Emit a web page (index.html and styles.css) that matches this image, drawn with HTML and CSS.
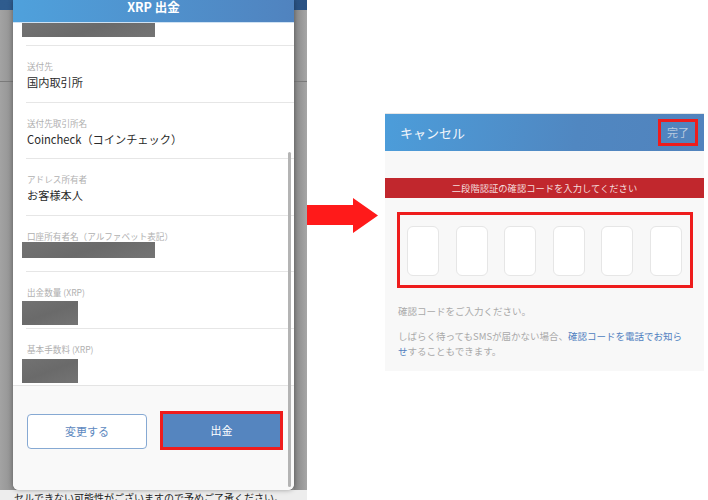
FILE: index.html
```html
<!DOCTYPE html>
<html lang="ja">
<head>
<meta charset="utf-8">
<title>XRP 出金</title>
<link rel="stylesheet" href="styles.css">
</head>
<body>
<div class="shot-left">
  <div class="backdrop">
    <div class="bd-top"></div>
    <div class="bd-band"></div>
    <div class="bd-fill"></div>
    <div class="bd-bottom">セルできない可能性がございますので予めご了承ください。</div>
  </div>
  <div class="modal">
    <div class="modal-head">XRP 出金</div>
    <div class="modal-body">
      <div class="row row-first"><div class="redact redact-wide redact-cut"></div></div>
      <div class="row">
        <div class="label">送付先</div>
        <div class="value">国内取引所</div>
      </div>
      <div class="row">
        <div class="label">送付先取引所名</div>
        <div class="value">Coincheck（コインチェック）</div>
      </div>
      <div class="row">
        <div class="label">アドレス所有者</div>
        <div class="value">お客様本人</div>
      </div>
      <div class="row">
        <div class="label">口座所有者名（アルファベット表記）</div>
        <div class="redact redact-wide"></div>
      </div>
      <div class="row">
        <div class="label">出金数量 (XRP)</div>
        <div class="redact redact-small"></div>
      </div>
      <div class="row row-last">
        <div class="label">基本手数料 (XRP)</div>
        <div class="redact redact-small redact-low"></div>
      </div>
    </div>
    <div class="modal-foot">
      <div class="btn btn-outline">変更する</div>
      <div class="mark"><div class="btn btn-fill">出金</div></div>
    </div>
    <div class="scrollbar"></div>
  </div>
</div>

<div class="arrow-col">
  <svg class="arrow" width="71" height="36" viewBox="0 0 71 36">
    <polygon points="0,7 46,7 46,0 71,17.5 46,35 46,27 0,27" fill="#ff1a1a"/>
  </svg>
</div>

<div class="panel">
  <div class="panel-head">
    <span class="cancel">キャンセル</span>
    <span class="done">完了</span>
  </div>
  <div class="panel-body">
    <div class="banner">二段階認証の確認コードを入力してください</div>
    <div class="code-mark">
      <div class="digit"></div>
      <div class="digit"></div>
      <div class="digit"></div>
      <div class="digit"></div>
      <div class="digit"></div>
      <div class="digit"></div>
    </div>
    <p class="note">確認コードをご入力ください。</p>
    <p class="note note-2">しばらく待ってもSMSが届かない場合、<span class="link">確認コードを電話でお知らせ</span>することもできます。</p>
  </div>
</div>
</body>
</html>
```

FILE: styles.css
```css
* { box-sizing: border-box; }
html, body { margin: 0; padding: 0; }
body {
  width: 708px;
  height: 500px;
  overflow: hidden;
  background: #ffffff;
  display: flex;
  align-items: flex-start;
  font-family: "Noto Sans CJK JP", "Noto Sans", sans-serif;
}

/* ---------- left screenshot ---------- */
.shot-left {
  position: relative;
  width: 307px;
  height: 500px;
  flex: none;
  overflow: hidden;
}
.backdrop {
  height: 500px;
  display: flex;
  flex-direction: column;
  background: linear-gradient(90deg, #a3a3a3 0px, #929292 13px, #929292 294px, #868686 294px, #a6a6a6 307px);
}
.bd-top {
  height: 10px;
  background: linear-gradient(90deg, #2f5c8e 0, #2a5283 100%);
}
.bd-band {
  height: 72px;
  border-bottom: 1px solid #7a7a7a;
}
.bd-fill { flex: 1; }
.bd-bottom {
  height: 10px;
  background: #ededed;
  font-size: 10px;
  line-height: 14px;
  color: #222;
  padding-left: 14px;
  overflow: hidden;
  white-space: nowrap;
  padding-top: 1px;
}

.modal {
  position: absolute;
  left: 13px;
  top: 0;
  width: 281px;
  height: 490px;
  background: #ffffff;
  border-radius: 0 0 6px 6px;
  overflow: hidden;
  box-shadow: 0 0 5px rgba(0, 0, 0, 0.35);
  display: flex;
  flex-direction: column;
}
.modal-head {
  height: 23px;
  flex: none;
  background: linear-gradient(90deg, #4fa1dc 0%, #5083bf 100%);
  border-bottom: 1px solid #cfe2f3;
  color: #ffffff;
  font-weight: bold;
  font-size: 12.5px;
  line-height: 13px;
  text-align: center;
}
.modal-body {
  flex: 1;
  display: flex;
  flex-direction: column;
}
.row {
  margin-left: 13px;
  padding-left: 1px;
  height: 56.6px;
  padding-top: 14px;
  border-bottom: 1px solid #e6e6e6;
}
.row-first {
  height: 23px;
  padding-top: 0;
}
.row-last {
  border-bottom: none;
  height: 55px;
}
.label {
  font-size: 8.6px;
  line-height: 12px;
  color: #b0b0b0;
  white-space: nowrap;
}
.value {
  margin-top: 2px;
  font-size: 11.2px;
  line-height: 16px;
  color: #2a2a2a;
  white-space: nowrap;
}
.redact {
  margin-left: -5px;
  background: linear-gradient(160deg, #727272 0%, #6a6a6a 50%, #747474 100%);
}
.redact-wide {
  width: 133px;
  height: 16px;
}
.redact-cut {
  height: 14px;
}
.redact-small {
  width: 56px;
  height: 24px;
  margin-top: 3px;
}
.redact-low { margin-top: 4px; }

.modal-foot {
  height: 105px;
  flex: none;
  background: #f9f9f9;
  border-top: 1px solid #e4e4e4;
  display: flex;
  align-items: flex-start;
  gap: 13px;
  padding: 25px 0 0 14px;
}
.btn {
  height: 35px;
  font-size: 11px;
  line-height: 33px;
  text-align: center;
  border-radius: 4px;
}
.btn-outline {
  width: 120px;
  margin-top: 3px;
  border: 1px solid #86a9d3;
  background: #ffffff;
  color: #5d88c0;
}
.mark {
  border: 3px solid #ee1c1c;
}
.btn-fill {
  width: 117px;
  height: 33px;
  line-height: 33px;
  border-radius: 0;
  background: #5585bf;
  color: #ffffff;
}
.scrollbar {
  position: absolute;
  right: 3px;
  top: 152px;
  width: 3px;
  height: 335px;
  border-radius: 2px;
  background: #b4b4b4;
}

/* ---------- arrow ---------- */
.arrow-col {
  width: 78px;
  flex: none;
  padding-top: 198px;
}
.arrow { display: block; }

/* ---------- right panel ---------- */
.panel {
  width: 319px;
  flex: none;
  margin-top: 113px;
  border-top: 1px solid #e6e6e6;
}
.panel-head {
  height: 37px;
  background: linear-gradient(100deg, #4c9dda 0%, #5087c1 60%, #5183bd 100%);
  display: flex;
  align-items: center;
  justify-content: space-between;
  padding: 0 6px 0 15px;
}
.cancel {
  color: #f2f6fb;
  font-size: 13px;
  line-height: 18px;
}
.done {
  color: #b9cade;
  font-size: 11px;
  line-height: 15px;
  border: 3px solid #ee1c1c;
  padding: 3px 6px 3px 6px;
  width: 40px;
  text-align: center;
}
.panel-body {
  background: #f8f8f8;
  height: 220px;
  padding-top: 27px;
}
.banner {
  height: 20px;
  background: #c1272d;
  color: #f4dede;
  font-size: 9.3px;
  line-height: 20px;
  text-align: center;
}
.code-mark {
  margin: 14px 11px 0 12px;
  border: 3px solid #ee1c1c;
  height: 76px;
  padding: 11px 8px 0 7px;
  display: flex;
  justify-content: space-between;
}
.digit {
  width: 32px;
  height: 50px;
  background: #ffffff;
  border: 1px solid #e6e6e6;
  border-radius: 6px;
}
.note {
  margin: 16px 14px 0 13px;
  font-size: 9.5px;
  line-height: 15px;
  color: #a9a9a9;
}
.note-2 { margin-top: 10px; }
.link { color: #4f7fc0; }
```
